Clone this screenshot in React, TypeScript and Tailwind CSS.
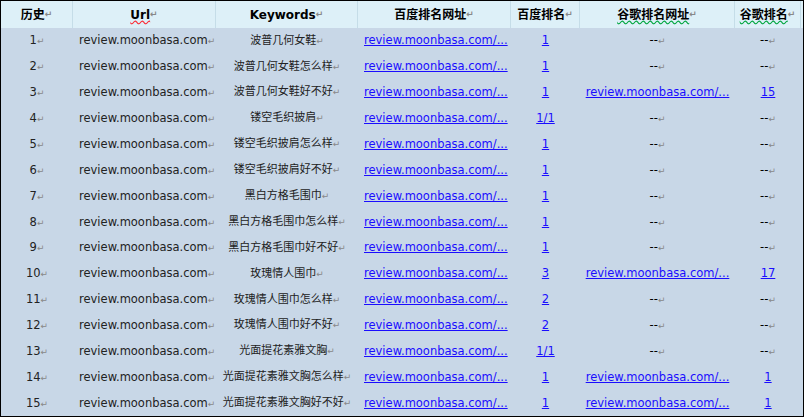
import React from "react";

const rows: [string, string, string, string, string][] = [
  ["1", "波普几何女鞋", "1", "", ""],
  ["2", "波普几何女鞋怎么样", "1", "", ""],
  ["3", "波普几何女鞋好不好", "1", "u", "15"],
  ["4", "镂空毛织披肩", "1/1", "", ""],
  ["5", "镂空毛织披肩怎么样", "1", "", ""],
  ["6", "镂空毛织披肩好不好", "1", "", ""],
  ["7", "黑白方格毛围巾", "1", "", ""],
  ["8", "黑白方格毛围巾怎么样", "1", "", ""],
  ["9", "黑白方格毛围巾好不好", "1", "", ""],
  ["10", "玫瑰情人围巾", "3", "u", "17"],
  ["11", "玫瑰情人围巾怎么样", "2", "", ""],
  ["12", "玫瑰情人围巾好不好", "2", "", ""],
  ["13", "光面提花素雅文胸", "1/1", "", ""],
  ["14", "光面提花素雅文胸怎么样", "1", "u", "1"],
  ["15", "光面提花素雅文胸好不好", "1", "u", "1"],
];

const M = () => <span className="text-[#888] text-[9px]">↵</span>;
const cols = "grid grid-cols-[72px_143px_142px_153px_69px_155px_66px]";
const font = { fontFamily: '"DejaVu Sans", "Noto Sans CJK SC", sans-serif' };

export default function App() {
  return (
    <div className="w-[804px] h-[417px] bg-white" style={font}>
      <div className="w-[804px] h-[417px] border border-black bg-[#c8d7e7] text-[11.5px] text-[#222] overflow-hidden">
        <div className={`${cols} h-[27px] bg-[#ddf0f8] font-bold text-black items-center text-[12px]`}>
          {["历史", "Url", "Keywords", "百度排名网址", "百度排名", "谷歌排名网址", "谷歌排名"].map((h, i) => (
            <div key={i} className="h-full flex items-center justify-center border-r border-[#c5dde8]">
              <span className={i === 1 ? "underline decoration-wavy decoration-red-500" : i >= 5 ? "underline decoration-wavy decoration-green-600" : ""}>{h}</span>
              <M />
            </div>
          ))}
        </div>
        {rows.map((r) => (
          <div key={r[0]} className={`${cols} h-[25.9px] items-center`}>
            <div className="text-center">{r[0]}<M /></div>
            <div className="pl-[6px] whitespace-nowrap">review.moonbasa.com<M /></div>
            <div className="text-center whitespace-nowrap text-[11px]">{r[1]}<M /></div>
            <div className="pl-[6px] text-[#1a0dff] underline whitespace-nowrap">review.moonbasa.com/...</div>
            <div className="text-center text-[#1a0dff] underline">{r[2]}</div>
            <div className="text-center whitespace-nowrap">
              {r[3] ? <span className="text-[#1a0dff] underline">review.moonbasa.com/...</span> : <span className="text-black">--<M /></span>}
            </div>
            <div className="text-center">
              {r[4] ? <span className="text-[#1a0dff] underline">{r[4]}</span> : <span className="text-black">--<M /></span>}
            </div>
          </div>
        ))}
      </div>
    </div>
  );
}
